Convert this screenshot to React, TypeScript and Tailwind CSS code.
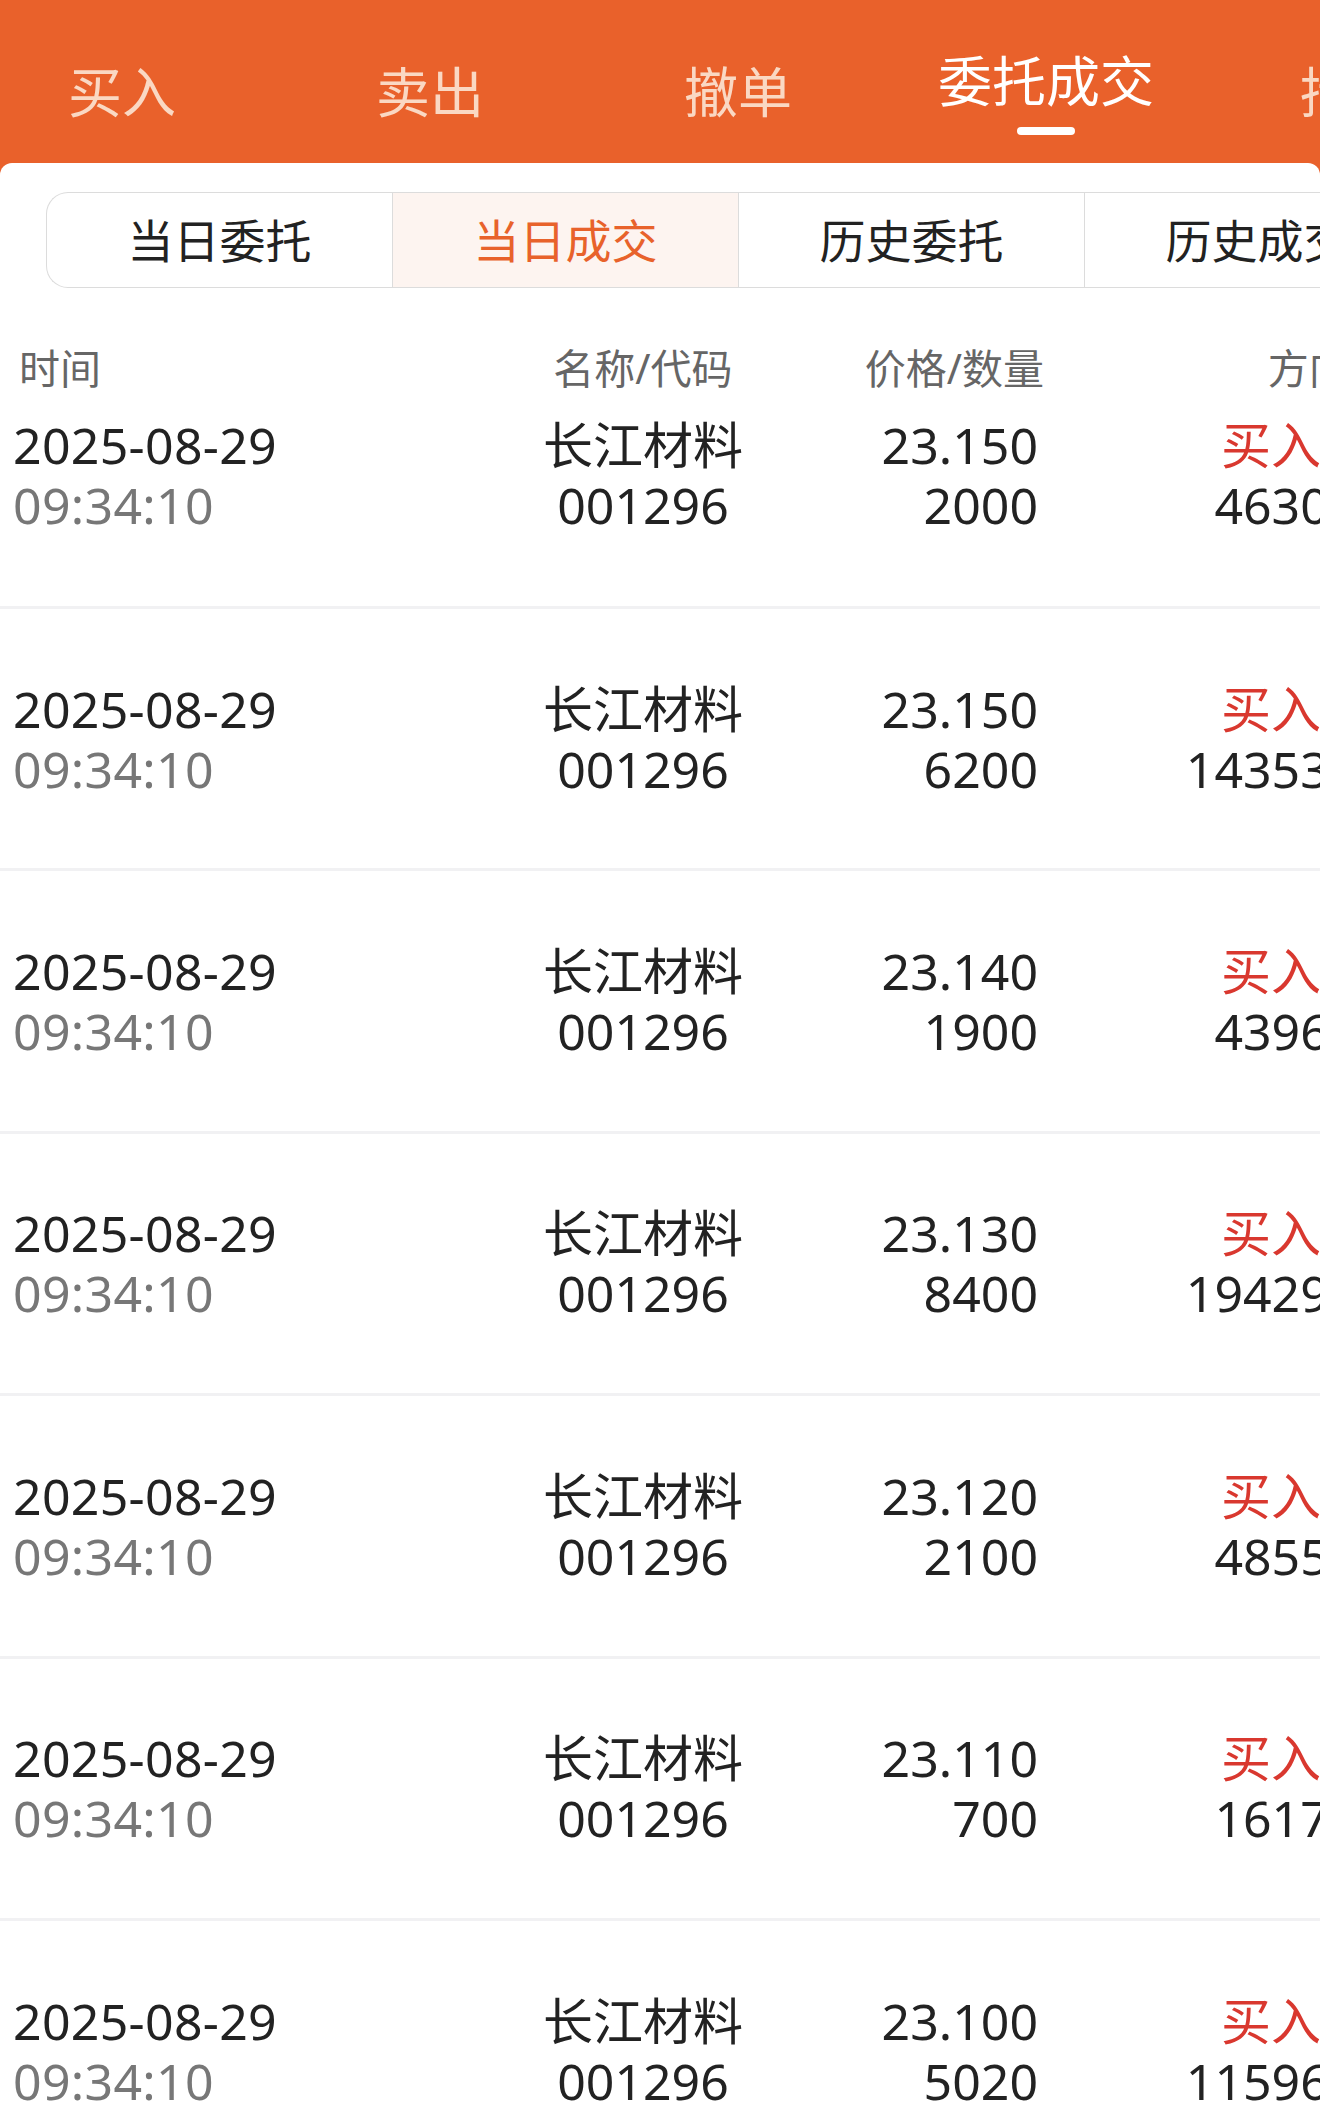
import React from 'react'

type Trade = {
  date: string
  time: string
  name: string
  code: string
  price: string
  qty: string
  side: string
  amount: string
}

const topTabs = ['买入', '卖出', '撤单', '委托成交', '持仓']
const subTabs = ['当日委托', '当日成交', '历史委托', '历史成交']

const rows: [string, string, string][] = [
  ['23.150', '2000', '46300.00'],
  ['23.150', '6200', '143530.00'],
  ['23.140', '1900', '43966.00'],
  ['23.130', '8400', '194292.00'],
  ['23.120', '2100', '48552.00'],
  ['23.110', '700', '16177.00'],
  ['23.100', '5020', '115962.00'],
]

const trades: Trade[] = rows.map(([price, qty, amount]) => ({
  date: '2025-08-29',
  time: '09:34:10',
  name: '长江材料',
  code: '001296',
  price,
  qty,
  side: '买入成交',
  amount,
}))

function TradeCells({ t }: { t: Trade }) {
  return (
    <>
      <div className="w-[446px] shrink-0 pl-[13px] tracking-[0.3px]">
        <div className="text-[#222]">{t.date}</div>
        <div className="text-[#777]">{t.time}</div>
      </div>
      <div className="w-[394px] shrink-0 text-center text-[#222]">
        <div>{t.name}</div>
        <div>{t.code}</div>
      </div>
      <div className="w-[198px] shrink-0 text-right text-[#222]">
        <div>{t.price}</div>
        <div>{t.qty}</div>
      </div>
      <div className="w-[390px] shrink-0 text-right">
        <div className="pr-[7px] text-[#d9382f]">{t.side}</div>
        <div className="text-[#222]">{t.amount}</div>
      </div>
    </>
  )
}

export default function App() {
  const activeTop = 3
  const activeSub = 1

  return (
    <div className="w-[1320px] min-h-[2120px] overflow-hidden bg-[#e9612b] font-['Noto_Sans','Noto_Sans_CJK_SC',sans-serif]">
      {/* top tab bar */}
      <div className="flex h-[163px] ml-[-32px]">
        {topTabs.map((tab, i) => (
          <div key={tab} className="w-[308px] shrink-0 flex flex-col items-center">
            {i === activeTop ? (
              <>
                <div className="mt-[49px] text-[54px] leading-[64px] text-white">{tab}</div>
                <div className="mt-[14px] h-[8px] w-[58px] rounded-full bg-white" />
              </>
            ) : (
              <div className="mt-[60px] text-[54px] leading-[64px] text-[#fad8c3]">{tab}</div>
            )}
          </div>
        ))}
      </div>

      <div className="bg-white rounded-t-[12px] min-h-[1957px]">
        {/* segmented tabs */}
        <div className="pt-[29px] pl-[46px]">
          <div className="flex h-[96px]">
            {subTabs.map((tab, i) => (
              <div
                key={tab}
                className={
                  'w-[346px] shrink-0 flex items-center justify-center text-[46px] border-y border-[#dcdcdc] ' +
                  (i === 0 ? 'border-l rounded-l-[22px] ' : 'border-l ') +
                  (i === activeSub ? 'bg-[#fdf4f0] text-[#e8622b]' : 'bg-white text-[#222]')
                }
              >
                {tab}
              </div>
            ))}
          </div>
        </div>

        {/* table header */}
        <div className="flex pt-[56px] text-[41px] leading-[48px] text-[#666]">
          <div className="w-[446px] shrink-0 pl-[19px]">时间</div>
          <div className="w-[394px] shrink-0 text-center">名称/代码</div>
          <div className="w-[204px] shrink-0 text-right">价格/数量</div>
          <div className="w-[403px] shrink-0 text-right">方向/金额</div>
        </div>

        {/* rows */}
        <div className="text-[50px] leading-[60px]">
          {trades.map((t, i) =>
            i === 0 ? (
              <div key={i} className="flex h-[217px] pt-[23px] border-b-[3px] border-[#f1f1f3]">
                <TradeCells t={t} />
              </div>
            ) : (
              <div key={i} className="flex items-center h-[262.4px] border-b-[3px] border-[#f1f1f3]">
                <TradeCells t={t} />
              </div>
            )
          )}
        </div>
      </div>
    </div>
  )
}
